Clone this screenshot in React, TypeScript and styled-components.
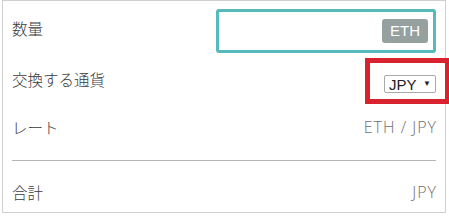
import React from "react";
import styled, { createGlobalStyle } from "styled-components";

const GlobalStyle = createGlobalStyle`
  html, body {
    margin: 0;
    padding: 0;
    background: #fff;
  }
  body {
    font-family: "Open Sans", "Noto Sans CJK JP", sans-serif;
  }
`;

const Card = styled.div`
  position: relative;
  box-sizing: border-box;
  width: 444px;
  height: 213px;
  margin-left: 2px;
  border: 1px solid #cfcfcf;
  padding: 8px 9px 0 9px;
  display: flex;
  flex-direction: column;
`;

const Row = styled.div<{ $height: number; $top?: number }>`
  box-sizing: border-box;
  display: flex;
  align-items: center;
  justify-content: space-between;
  height: ${(p) => p.$height}px;
  padding-top: ${(p) => p.$top ?? 0}px;
  flex-shrink: 0;
`;

const Label = styled.span`
  font-family: "Noto Sans CJK JP", sans-serif;
  font-size: 15.5px;
  line-height: 20px;
  color: #3a3a3a;
  font-weight: 300;
  margin-bottom: 6px;
`;

const Value = styled.span`
  font-family: "Open Sans", "Noto Sans CJK JP", sans-serif;
  font-size: 16px;
  line-height: 20px;
  font-weight: 300;
  color: #707070;
  letter-spacing: 1px;
  margin-right: -1px;
  margin-bottom: 6px;
`;

const AmountBox = styled.div`
  box-sizing: border-box;
  width: 220px;
  height: 44px;
  border: 3px solid #56b9bc;
  border-radius: 3px;
  display: flex;
  align-items: center;
  justify-content: flex-end;
  padding-right: 5px;
`;

const Unit = styled.span`
  background: #95a09f;
  color: #fff;
  font-family: "Liberation Sans", Arial, sans-serif;
  font-size: 15px;
  border-radius: 3px;
  padding: 0 8px;
  height: 24px;
  line-height: 24px;
`;

const SelectWrap = styled.div`
  position: relative;
  display: flex;
  margin-top: 4px;
`;

const Highlight = styled.span`
  position: absolute;
  left: -19px;
  right: -14px;
  top: -17px;
  bottom: -11px;
  border: 5px solid #d8222e;
  pointer-events: none;
`;

const Select = styled.div`
  box-sizing: border-box;
  width: 52px;
  height: 18px;
  border: 1px solid #a9a9a9;
  border-radius: 2px;
  background: #fff;
  display: flex;
  align-items: center;
  justify-content: space-between;
  padding: 0 4px 0 4px;
  font-family: "Liberation Sans", Arial, sans-serif;
  font-size: 15px;
  font-weight: 400;
  color: #222;
`;

const Caret = styled.span`
  font-size: 8px;
  line-height: 1;
`;

const Divider = styled.hr`
  margin: 11px 0 0 0;
  border: none;
  border-top: 1px solid #b5b5b5;
  flex-shrink: 0;
`;

export default function App() {
  return (
    <>
      <GlobalStyle />
      <Card>
        <Row $height={44}>
          <Label>数量</Label>
          <AmountBox>
            <Unit>ETH</Unit>
          </AmountBox>
        </Row>
        <Row $height={58}>
          <Label>交換する通貨</Label>
          <SelectWrap>
            <Highlight />
            <Select>
              JPY <Caret>▼</Caret>
            </Select>
          </SelectWrap>
        </Row>
        <Row $height={38}>
          <Label>レート</Label>
          <Value>ETH / JPY</Value>
        </Row>
        <Divider />
        <Row $height={51} $top={17}>
          <Label>合計</Label>
          <Value>JPY</Value>
        </Row>
      </Card>
    </>
  );
}
